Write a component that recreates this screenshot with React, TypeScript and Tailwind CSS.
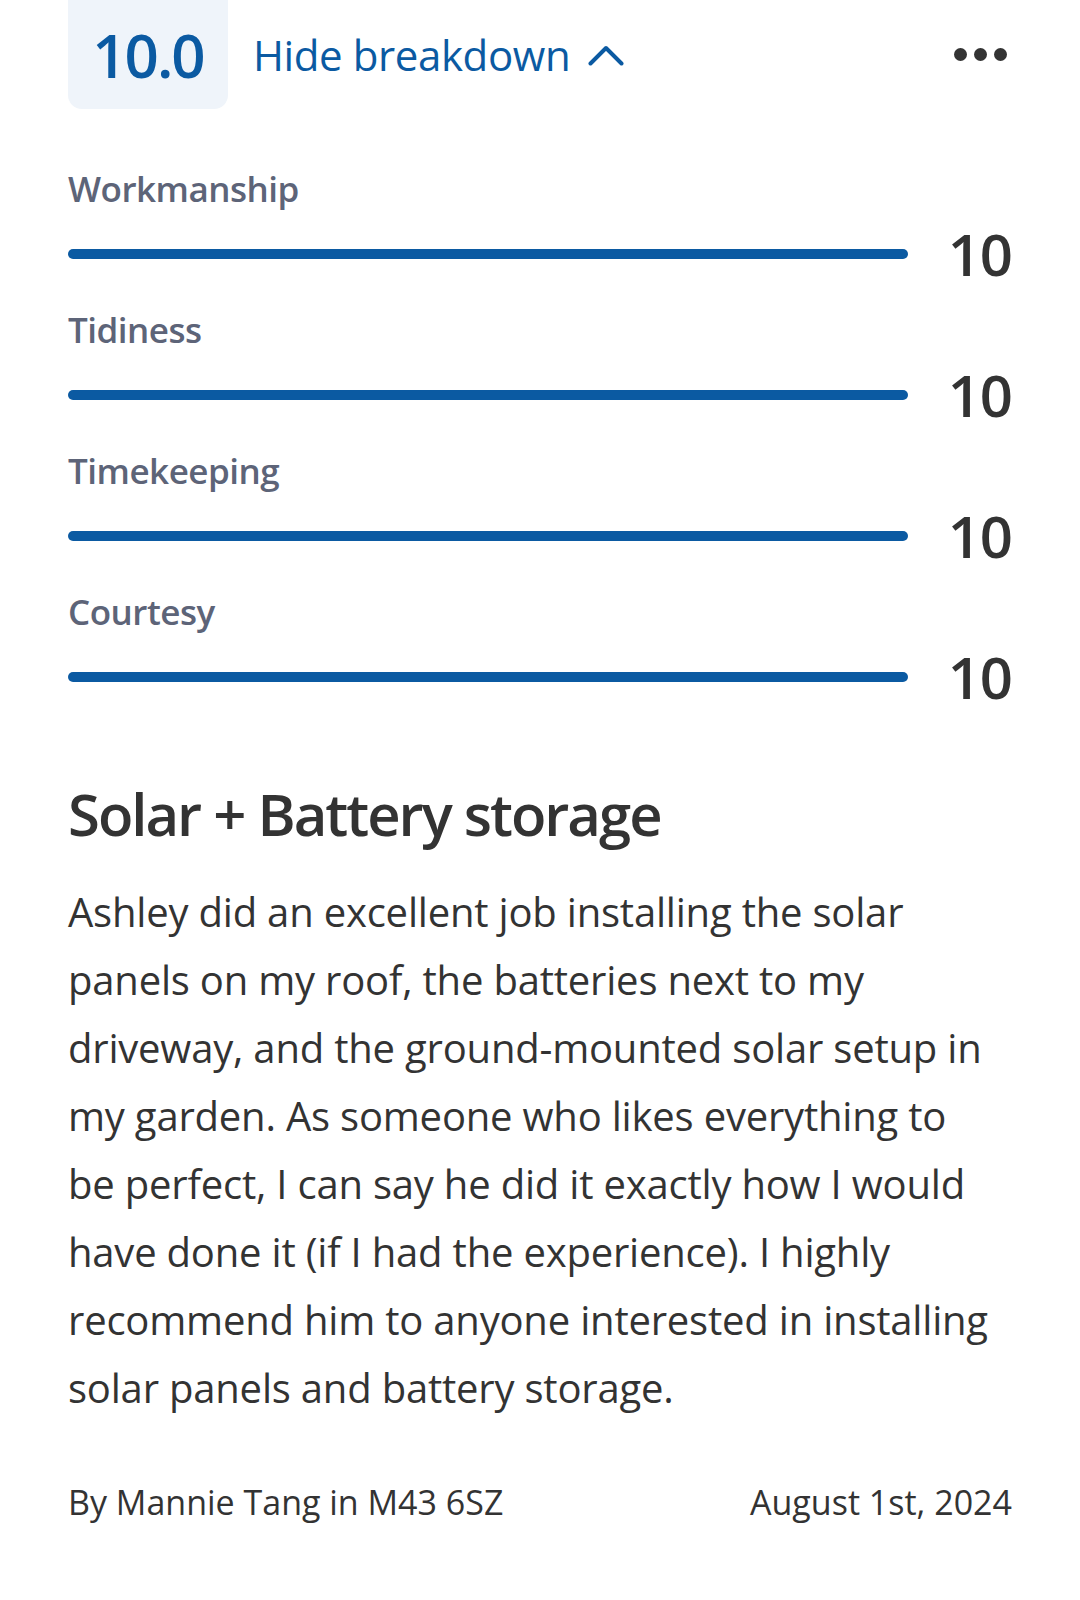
const ratings = [
  { label: 'Workmanship', score: 10 },
  { label: 'Tidiness', score: 10 },
  { label: 'Timekeeping', score: 10 },
  { label: 'Courtesy', score: 10 },
];

function ChevronUp() {
  return (
    <svg width="36" height="22" viewBox="0 0 36 22" fill="none" className="shrink-0">
      <path d="M2.5 19.5 L18 4 L33.5 19.5" stroke="#0b5aa2" strokeWidth="4" strokeLinecap="round" strokeLinejoin="round" />
    </svg>
  );
}

function Dots() {
  return (
    <div className="flex items-center gap-[7px]">
      <span className="w-[13px] h-[13px] rounded-full bg-[#333333]" />
      <span className="w-[13px] h-[13px] rounded-full bg-[#333333]" />
      <span className="w-[13px] h-[13px] rounded-full bg-[#333333]" />
    </div>
  );
}

export default function App() {
  return (
    <div className="w-[1080px] min-h-[1600px] bg-white px-[68px] font-['Open_Sans',sans-serif] text-[#333333]">
      <header className="flex items-center h-[109px]">
        <div className="w-[160px] h-[109px] rounded-b-[14px] bg-[#eff4fa] flex items-center justify-center">
          <span className="text-[60px] leading-none font-semibold text-[#0b5aa2] tracking-[-2px]">10.0</span>
        </div>
        <button className="ml-[25px] flex items-center gap-[18px] text-[42px] leading-none text-[#0b5aa2] font-medium tracking-[-0.4px]">
          Hide breakdown
          <ChevronUp />
        </button>
        <div className="ml-auto mr-[5px]">
          <Dots />
        </div>
      </header>

      <section className="mt-[54px] flex flex-col gap-[20px]">
        {ratings.map((r) => (
          <div key={r.label} className="flex flex-col">
            <div className="text-[35px] leading-[52px] font-semibold tracking-[-0.5px] text-[#5d6478]">{r.label}</div>
            <div className="mt-[9px] h-[60px] flex items-center gap-[40px]">
              <div className="flex-1 h-[10px] rounded-full bg-[#0b5aa2]" />
              <span className="text-[58px] leading-[60px] font-semibold tracking-[-1px] text-[#333333]">{r.score}</span>
            </div>
          </div>
        ))}
      </section>

      <h2 className="mt-[67px] text-[58px] leading-[80px] font-semibold tracking-[-2px] text-[#333333]">
        Solar + Battery storage
      </h2>
      <p className="mt-[24px] pr-[15px] text-[40px] leading-[68px] tracking-[-0.2px] text-[#333333]">
        Ashley did an excellent job installing the solar panels on my roof, the batteries next to my driveway, and
        the ground-mounted solar setup in my garden. As someone who likes everything to be perfect, I can say he did
        it exactly how I would have done it (if I had the experience). I highly recommend him to anyone interested in
        installing solar panels and battery storage.
      </p>

      <footer className="mt-[56px] flex items-center justify-between text-[34px] leading-[48px] text-[#333333]">
        <span>By Mannie Tang in M43 6SZ</span>
        <span>August 1st, 2024</span>
      </footer>
    </div>
  );
}
